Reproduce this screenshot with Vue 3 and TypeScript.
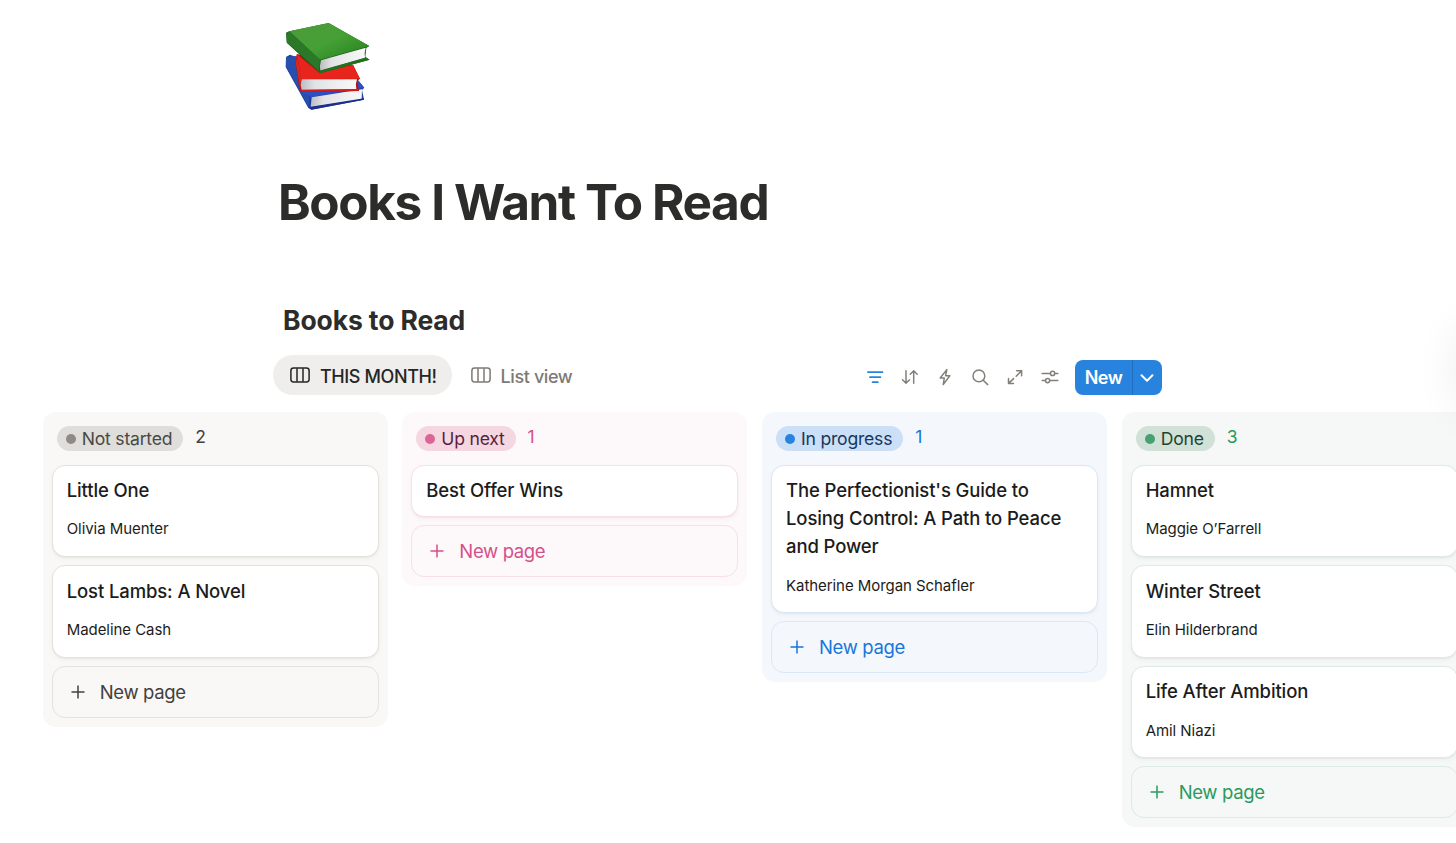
<script setup lang="ts">
import { ref } from 'vue'

interface Book {
  title: string
  author?: string
}

interface Column {
  key: string
  label: string
  books: Book[]
}

const activeView = ref('month')

const views = [
  { key: 'month', label: 'THIS MONTH!' },
  { key: 'list', label: 'List view' },
]

const columns = ref<Column[]>([
  {
    key: 'gray',
    label: 'Not started',
    books: [
      { title: 'Little One', author: 'Olivia Muenter' },
      { title: 'Lost Lambs: A Novel', author: 'Madeline Cash' },
    ],
  },
  {
    key: 'pink',
    label: 'Up next',
    books: [{ title: 'Best Offer Wins' }],
  },
  {
    key: 'blue',
    label: 'In progress',
    books: [
      {
        title: "The Perfectionist's Guide to Losing Control: A Path to Peace and Power",
        author: 'Katherine Morgan Schafler',
      },
    ],
  },
  {
    key: 'green',
    label: 'Done',
    books: [
      { title: 'Hamnet', author: 'Maggie O’Farrell' },
      { title: 'Winter Street', author: 'Elin Hilderbrand' },
      { title: 'Life After Ambition', author: 'Amil Niazi' },
    ],
  },
])
</script>

<template>
  <main class="page">
    <header class="page-header">
      <svg class="page-icon" viewBox="0 0 360 330">
        <defs>
          <linearGradient id="green-top" x1="0" y1="0" x2="1" y2="1">
            <stop offset="0" stop-color="#4d9a3b" />
            <stop offset="0.5" stop-color="#45a035" />
            <stop offset="1" stop-color="#257f1b" />
          </linearGradient>
          <linearGradient id="paper" x1="0" y1="0" x2="1" y2="0">
            <stop offset="0" stop-color="#bcbbc0" />
            <stop offset="0.25" stop-color="#e3e2e6" />
            <stop offset="1" stop-color="#f9f9fa" />
          </linearGradient>
        </defs>
        <!-- blue book -->
        <path d="M48 141L60 134L262 208L283 233L276 240L282 269L124 299L115 294L47 171Z" fill="#1f3fa5" />
        <path d="M48 141L80 138L96 232L118 262L116 292L48 168Z" fill="#294fae" />
        <path d="M96 245L262 210L283 233L124 261Z" fill="#2c50c4" />
        <path d="M125 262L276 238L275 268L122 292Z" fill="url(#paper)" />
        <path d="M118 291L282 265L282 269L124 299Z" fill="#1c2f8c" />
        <!-- red book -->
        <path d="M80 132L250 166L270 206L262 213L267 243L96 246L88 238L77 160Z" fill="#b81213" />
        <path d="M82 134L148 188L248 165L270 206L93 207Z" fill="#e8251c" />
        <path d="M81 136L93 207L91 237L78 160Z" fill="#d72b24" />
        <path d="M95 208L261 208Q255 222 259 238L95 240Q90 224 95 208Z" fill="url(#paper)" />
        <path d="M90 239L265 237L267 243L96 246Z" fill="#d51b18" />
        <!-- green book -->
        <path d="M48 68L58 64L176 39L298 108L289 114L286 140L299 149L150 190L143 184L50 98Z" fill="#17631a" />
        <path d="M58 64L176 39L298 108L150 149Z" fill="url(#green-top)" />
        <path d="M49 70L58 64L150 149L147 184L51 97Z" fill="#2a7828" />
        <path d="M153 151L287 113Q282 128 285 143L151 183Q148 167 153 151Z" fill="url(#paper)" />
        <path d="M147 182L286 143L299 149L150 190Z" fill="#23701f" />
      </svg>
      <h1 class="page-title">Books I Want To Read</h1>
    </header>

    <section class="database">
      <h2 class="db-title">Books to Read</h2>

      <div class="db-bar">
        <nav class="tabs">
          <button
            v-for="view in views"
            :key="view.key"
            class="tab"
            :class="{ active: view.key === activeView }"
            @click="activeView = view.key"
          >
            <svg class="tab-icon" viewBox="0 0 20 16" fill="none" stroke="currentColor" stroke-width="1.5">
              <rect x="0.9" y="1.1" width="18.2" height="13.8" rx="2.6" />
              <path d="M7 1.2v13.6M13 1.2v13.6" />
            </svg>
            <span class="tab-label">{{ view.label }}</span>
          </button>
        </nav>

        <div class="tools">
          <svg class="tool on" viewBox="0 0 20 20">
            <path d="M3 5.2h14.4M5 10.2h10.4M7.6 15.2h5.2" />
          </svg>
          <svg class="tool" viewBox="0 0 20 20">
            <path d="M6 3.7v12.5M2.5 12.8L6 16.2l3.5-3.4M13.7 16.3V3.8M10.2 7.2l3.5-3.4 3.5 3.4" />
          </svg>
          <svg class="tool" viewBox="0 0 20 20">
            <path d="M11.8 2.6L5.2 11h4.1l-1.1 6.6 6.6-8.8h-4.2z" />
          </svg>
          <svg class="tool" viewBox="0 0 20 20">
            <circle cx="8.9" cy="8.9" r="5.9" />
            <path d="M13.2 13.2l4.5 4.4" />
          </svg>
          <svg class="tool" viewBox="0 0 20 20">
            <path d="M11.6 3.8h5v5M16.4 4L11.2 9.2M8.6 11.6L3.6 16.4M3.5 11.4v5h5" />
          </svg>
          <svg class="tool" viewBox="0 0 20 20">
            <path d="M2.2 6.4h8.2M14.8 6.4h3M2.2 13.6h3.2M9.8 13.6h8" />
            <circle cx="12.6" cy="6.4" r="2.1" />
            <circle cx="7.6" cy="13.6" r="2.1" />
          </svg>
          <div class="new-btn">
            <button class="new-label">New</button>
            <button class="new-more">
              <svg viewBox="0 0 14 10" width="14" height="10">
                <path d="M1.5 2.2L7 7.7l5.5-5.5" />
              </svg>
            </button>
          </div>
        </div>
      </div>
    </section>

    <div class="board">
      <section v-for="col in columns" :key="col.key" class="column" :class="col.key">
        <div class="column-head">
          <span class="status"><i class="dot"></i>{{ col.label }}</span>
          <span class="count">{{ col.books.length }}</span>
        </div>
        <article v-for="book in col.books" :key="book.title" class="card">
          <h3 class="card-title">{{ book.title }}</h3>
          <p v-if="book.author" class="card-author">{{ book.author }}</p>
        </article>
        <button class="new-page">
          <svg class="plus" viewBox="0 0 14 14"><path d="M7 0.5v13M0.5 7h13" /></svg>
          <span>New page</span>
        </button>
      </section>
    </div>

    <div class="edge-panel"></div>
  </main>
</template>

<style>
body {
  margin: 0;
  background: #fff;
}
</style>

<style scoped>
.page {
  position: relative;
  box-sizing: border-box;
  width: 100%;
  height: 843px;
  padding-top: 10px;
  overflow: hidden;
  font-family: Inter, "Liberation Sans", sans-serif;
  color: #2c2c2b;
}

button {
  margin: 0;
  padding: 0;
  border: 0;
  background: none;
  font: inherit;
  color: inherit;
  cursor: pointer;
}

.page-header {
  padding-left: 270px;
}
.page-icon {
  display: block;
  width: 120px;
  height: 110px;
}
.page-title {
  margin: 52px 0 0 8px;
  font-size: 49.5px;
  line-height: 60px;
  font-weight: 700;
  letter-spacing: -1.4px;
}

.database {
  width: 889px;
  margin-left: 273px;
}
.db-title {
  margin: 70px 0 0 10px;
  font-size: 26.5px;
  line-height: 36px;
  font-weight: 700;
  letter-spacing: -0.12px;
}
.db-bar {
  display: flex;
  justify-content: space-between;
  align-items: center;
  height: 40px;
  margin-top: 17px;
}
.tabs {
  display: flex;
  gap: 2px;
}
.tab {
  display: flex;
  align-items: center;
  gap: 10px;
  height: 40px;
  padding: 0 15px 0 17px;
  border-radius: 20px;
  font-size: 18px;
  font-weight: 500;
  letter-spacing: -0.4px;
  color: #7d7a75;
}
.tab.active {
  background: #efeeec;
  color: #262625;
}
.tab-icon {
  width: 20px;
  height: 16px;
}
.tab-label {
  padding-top: 2px;
}

.tools {
  display: flex;
  align-items: center;
  gap: 15px;
  padding-top: 4px;
}
.tool {
  width: 20px;
  height: 20px;
  fill: none;
  stroke: #83807b;
  stroke-width: 1.5;
  stroke-linecap: round;
  stroke-linejoin: round;
}
.tool.on {
  stroke: #2783de;
  stroke-width: 1.8;
}
.new-btn {
  display: flex;
  width: 87px;
  height: 35px;
  border-radius: 8px;
  background: #2783de;
  color: #fff;
  overflow: hidden;
}
.new-label {
  width: 57px;
  font-size: 18px;
  font-weight: 600;
  letter-spacing: -0.5px;
}
.new-more {
  display: flex;
  align-items: center;
  justify-content: center;
  flex: 1;
  padding-right: 1px;
  border-left: 1px solid #1f6dbb;
}
.new-more svg {
  margin-top: 2px;
}
.new-more path {
  fill: none;
  stroke: #fff;
  stroke-width: 2;
  stroke-linecap: round;
  stroke-linejoin: round;
}

.board {
  display: flex;
  align-items: flex-start;
  gap: 14.67px;
  width: max-content;
  margin-top: 17px;
  padding-left: 42.7px;
}
.column {
  --bg: #f9f8f7;
  --line: #e3e2df;
  --text: #42413e;
  --pill: #dfdeda;
  --pill-text: #494846;
  --dot: #8e8b86;
  display: flex;
  flex-direction: column;
  gap: 8px;
  box-sizing: border-box;
  width: 345px;
  padding: 0 9px 9px;
  border-radius: 13px;
  background: var(--bg);
}
.column.pink {
  --bg: #fdf8fa;
  --line: #f8dfe8;
  --text: #d5508a;
  --pill: #f5d7e1;
  --pill-text: #5a1f3c;
  --dot: #dd6595;
}
.column.blue {
  --bg: #f4f8fd;
  --line: #d9e8f9;
  --text: #1976d9;
  --pill: #cbdff7;
  --pill-text: #17375f;
  --dot: #2783de;
}
.column.green {
  --bg: #f5f8f6;
  --line: #dcebe3;
  --text: #2a9a60;
  --pill: #d2e1d7;
  --pill-text: #1d4430;
  --dot: #46a171;
}

.column-head {
  display: flex;
  align-items: center;
  gap: 12px;
  box-sizing: border-box;
  height: 44.5px;
  padding: 4px 0 0 5px;
}
.status {
  display: flex;
  align-items: center;
  box-sizing: border-box;
  height: 25px;
  margin-top: 4px;
  padding: 1px 11px 0 9px;
  border-radius: 13px;
  background: var(--pill);
  color: var(--pill-text);
  font-size: 17.6px;
  letter-spacing: -0.22px;
}
.dot {
  width: 10px;
  height: 10px;
  margin-right: 6px;
  border-radius: 50%;
  background: var(--dot);
}
.count {
  font-size: 17.5px;
  color: var(--text);
}

.card {
  box-sizing: border-box;
  padding: 10.75px 14px 11.75px;
  border: 1px solid var(--line);
  border-radius: 13px;
  background: #fff;
  box-shadow: 0 2px 5px rgba(25, 25, 25, 0.04), 0 1px 1px rgba(25, 25, 25, 0.04);
}
.card-title {
  margin: 0;
  font-size: 18.5px;
  line-height: 28.1px;
  font-weight: 500;
  letter-spacing: -0.12px;
  color: #1c1c1b;
}
.card-author {
  margin: 15px 0 5px;
  font-size: 15px;
  line-height: 20px;
  letter-spacing: -0.06px;
  color: #1c1c1b;
}

.new-page {
  display: flex;
  align-items: center;
  gap: 15px;
  box-sizing: border-box;
  height: 52px;
  padding-left: 18px;
  border: 1px solid var(--line);
  border-radius: 13px;
  color: var(--text);
  font-size: 18.5px;
  letter-spacing: -0.35px;
}
.plus {
  width: 14px;
  height: 14px;
  fill: none;
  stroke: currentColor;
  stroke-width: 1.5;
}

/* floating panel parked past the right edge, only its shadow shows */
.edge-panel {
  position: absolute;
  left: 100%;
  top: 325px;
  width: 40px;
  height: 90px;
  border-radius: 20px;
  box-shadow: 0 0 44px rgba(0, 0, 0, 0.07);
}
</style>
